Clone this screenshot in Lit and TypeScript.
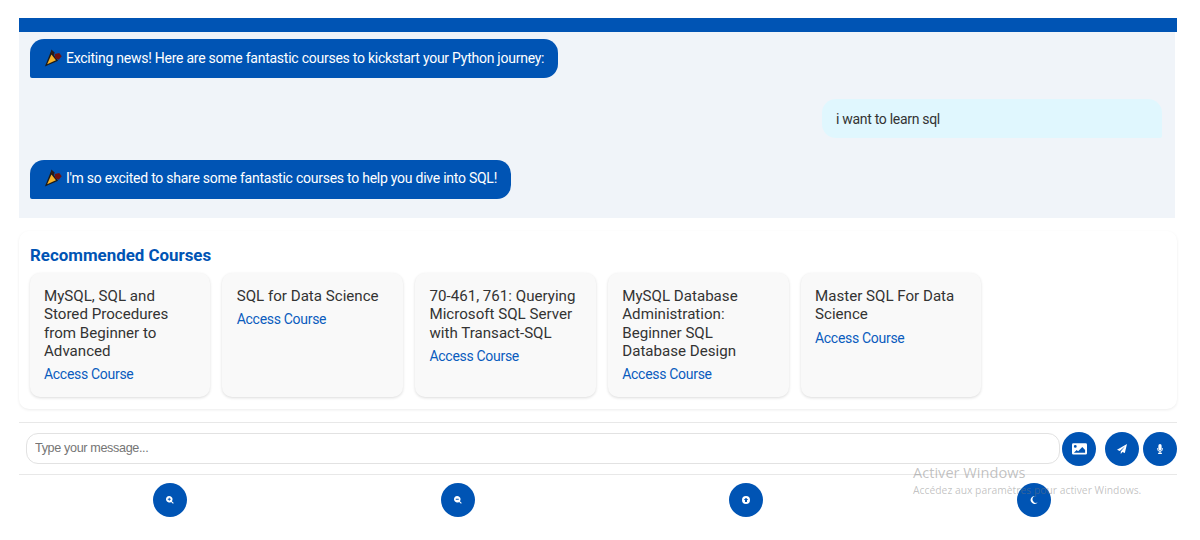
import { LitElement, css, html, svg } from "lit";
import { customElement } from "lit/decorators.js";

const courses = [
  "MySQL, SQL and Stored Procedures from Beginner to Advanced",
  "SQL for Data Science",
  "70-461, 761: Querying Microsoft SQL Server with Transact-SQL",
  "MySQL Database Administration: Beginner SQL Database Design",
  "Master SQL For Data Science",
];

const popper = html`<svg class="popper" viewBox="0 0 16 16">
  <path d="M6.200 2 .8 15.500 12.500 10.500z" fill="#1b1b1b"></path>
  <path d="M6.600 4.800 2.800 13.600 10.600 10z" fill="#f7b32b"></path>
  <path d="M6.500 .5 9.500 3 8.500 6 6 3.500z" fill="#2a1a1a"></path>
  <path d="M9.500 4.500 13.500 3.500 15.800 6.500 13 9.500 9.800 8z" fill="#6e1212"></path>
</svg>`;

const icons = {
  image: svg`<path d="M1.500 2.500h13A1.500 1.500 0 0 1 16 4v9a1.500 1.500 0 0 1-1.500 1.500h-13A1.500 1.500 0 0 1 0 13V4a1.500 1.500 0 0 1 1.500-1.500zm2 1.800a1.500 1.500 0 1 0 0 3 1.500 1.500 0 0 0 0-3zM2 12.500h12V9.500l-3-3-4.500 4.500L5 9.500l-3 3z" fill-rule="evenodd"></path>`,
  send: svg`<path d="M16 0 0 9.200l4.400 1.800L13 3.500 6 12v4l2.700-3.200 3.800 1.600z"></path>`,
  mic: svg`<path d="M8 0a2.600 2.600 0 0 0-2.600 2.600v5a2.600 2.600 0 0 0 5.200 0v-5A2.600 2.600 0 0 0 8 0zM3.400 6.500v1.200a4.600 4.600 0 0 0 3.800 4.500V14H5v2h6v-2H8.800v-1.800a4.600 4.600 0 0 0 3.800-4.500V6.500h-1.200v1.200a3.400 3.400 0 0 1-6.800 0V6.500z"></path>`,
  zoomIn: svg`<path d="M6.500 0a6.500 6.500 0 1 0 3.800 11.800L14 15.500 15.500 14l-3.700-3.700A6.500 6.500 0 0 0 6.500 0zM5.700 3.500h1.600v2.200h2.200v1.600H7.300v2.200H5.700V7.300H3.500V5.700h2.200z" fill-rule="evenodd"></path>`,
  zoomOut: svg`<path d="M6.500 0a6.500 6.500 0 1 0 3.800 11.800L14 15.500 15.500 14l-3.700-3.700A6.500 6.500 0 0 0 6.500 0zM3.500 5.700h6v1.600h-6z" fill-rule="evenodd"></path>`,
  up: svg`<path d="M8 0a8 8 0 1 0 0 16A8 8 0 0 0 8 0zm0 3.500 4.500 4.500H10v4H6V8H3.500z" fill-rule="evenodd"></path>`,
  moon: svg`<path d="M9.500 0a8 8 0 1 0 5.800 13.200A7 7 0 0 1 9.500 0z"></path>`,
};

@customElement("app-root")
export class AppRoot extends LitElement {
  static styles = css`
    :host {
      display: block;
      position: relative;
      height: 540px;
      overflow: hidden;
      box-sizing: border-box;
      padding: 18px 23px 0 19px;
      background: #fff;
      font-family: Roboto, "Liberation Sans", sans-serif;
      color: #333;
    }

    .topbar {
      height: 14px;
      background: #0054b4;
    }

    .chat {
      display: flex;
      flex-direction: column;
      gap: 21.3px;
      height: 186px;
      box-sizing: border-box;
      margin-right: 2px;
      padding: 7px 13px 0 11px;
      background: #f0f4f9;
    }

    .bubble {
      display: flex;
      align-items: center;
      gap: 4px;
      box-sizing: border-box;
      height: 39px;
      padding: 0 14px 2px;
      font-size: 14px;
      letter-spacing: -0.25px;
      border-radius: 14px 14px 14px 2px;
    }

    .bot {
      align-self: flex-start;
      background: #0054b4;
      color: #fff;
    }

    .user {
      align-self: flex-end;
      width: 340px;
      padding-bottom: 0;
      letter-spacing: -0.3px;
      background: #e0f7fe;
      color: #333;
      border-radius: 14px 14px 2px 14px;
    }

    .popper {
      width: 18px;
      height: 18px;
      flex: none;
    }

    .recommended {
      box-sizing: border-box;
      height: 178px;
      margin-top: 13px;
      padding: 14px 10px 0 10.5px;
      border-radius: 10px;
      box-shadow: 0 1px 3px rgba(0, 0, 0, 0.08);
    }

    h2 {
      margin: 0 0 8px 0.5px;
      padding-top: 1px;
      font-size: 16.9px;
      line-height: 19px;
      font-weight: 700;
      color: #0054b4;
    }

    .cards {
      display: flex;
      gap: 12px;
    }

    .card {
      box-sizing: border-box;
      width: 180.75px;
      height: 124px;
      padding: 14px 14px 14px 14.5px;
      background: #f9f9f9;
      border-radius: 10px;
      box-shadow: 0 1px 3px rgba(0, 0, 0, 0.14);
    }

    .card h3 {
      margin: 0 0 5px;
      font-size: 15.12px;
      line-height: 18.3px;
      font-weight: 400;
      color: #333;
    }

    .card a {
      display: block;
      font-size: 14px;
      letter-spacing: -0.3px;
      line-height: 18px;
      color: #0a5cbe;
      text-decoration: none;
    }

    .composer {
      display: flex;
      align-items: center;
      box-sizing: border-box;
      height: 53px;
      margin-top: 13px;
      padding: 0 0 0 7px;
      border-top: 1px solid #e8e8e8;
      border-bottom: 1px solid #e8e8e8;
    }

    input {
      flex: 1;
      min-width: 0;
      box-sizing: border-box;
      height: 31px;
      margin-right: 2px;
      padding: 0 8px 2px;
      border: 1px solid #e2e2e2;
      border-radius: 12px;
      background: #fff;
      font-family: "Liberation Sans", sans-serif;
      font-size: 12.6px;
      letter-spacing: -0.35px;
      outline: none;
    }

    input::placeholder {
      color: #757575;
    }

    .send {
      margin-left: 9px;
    }

    .mic {
      margin-left: 4px;
    }

    .round {
      display: flex;
      align-items: center;
      justify-content: center;
      flex: none;
      width: 34px;
      height: 34px;
      padding: 0;
      border: none;
      border-radius: 50%;
      background: #0054b4;
      color: #fff;
    }

    .round svg {
      fill: currentColor;
      width: 10px;
      height: 10px;
    }

    .round svg.large {
      width: 15px;
      height: 15px;
    }

    .nav {
      display: flex;
      justify-content: space-around;
      margin: 8px -1px 0 7px;
    }

    .nav .round svg {
      width: 8px;
      height: 8px;
    }

    .activation {
      position: absolute;
      left: 913px;
      top: 463px;
      font-family: "Open Sans", sans-serif;
      color: rgba(120, 120, 120, 0.45);
      pointer-events: none;
    }

    .activation strong {
      display: block;
      font-size: 14.6px;
      line-height: 19px;
      font-weight: 400;
    }

    .activation span {
      display: block;
      margin-top: 1px;
      font-size: 10.35px;
      line-height: 14px;
    }
  `;

  private icon(name: keyof typeof icons, cls = "") {
    return html`<svg class=${cls} viewBox="0 0 16 16">${icons[name]}</svg>`;
  }

  render() {
    return html`
      <div class="topbar"></div>
      <section class="chat">
        <div class="bubble bot">${popper}Exciting news! Here are some fantastic courses to kickstart your Python journey:</div>
        <div class="bubble user">i want to learn sql</div>
        <div class="bubble bot">${popper}I'm so excited to share some fantastic courses to help you dive into SQL!</div>
      </section>
      <section class="recommended">
        <h2>Recommended Courses</h2>
        <div class="cards">
          ${courses.map(
            (c) => html`<article class="card">
              <h3>${c}</h3>
              <a href="#">Access Course</a>
            </article>`
          )}
        </div>
      </section>
      <div class="composer">
        <input type="text" placeholder="Type your message..." />
        <button class="round">${this.icon("image", "large")}</button>
        <button class="round send">${this.icon("send")}</button>
        <button class="round mic">${this.icon("mic")}</button>
      </div>
      <nav class="nav">
        <button class="round">${this.icon("zoomIn")}</button>
        <button class="round">${this.icon("zoomOut")}</button>
        <button class="round">${this.icon("up")}</button>
        <button class="round">${this.icon("moon")}</button>
      </nav>
      <div class="activation">
        <strong>Activer Windows</strong>
        <span>Accédez aux paramètres pour activer Windows.</span>
      </div>
    `;
  }
}
